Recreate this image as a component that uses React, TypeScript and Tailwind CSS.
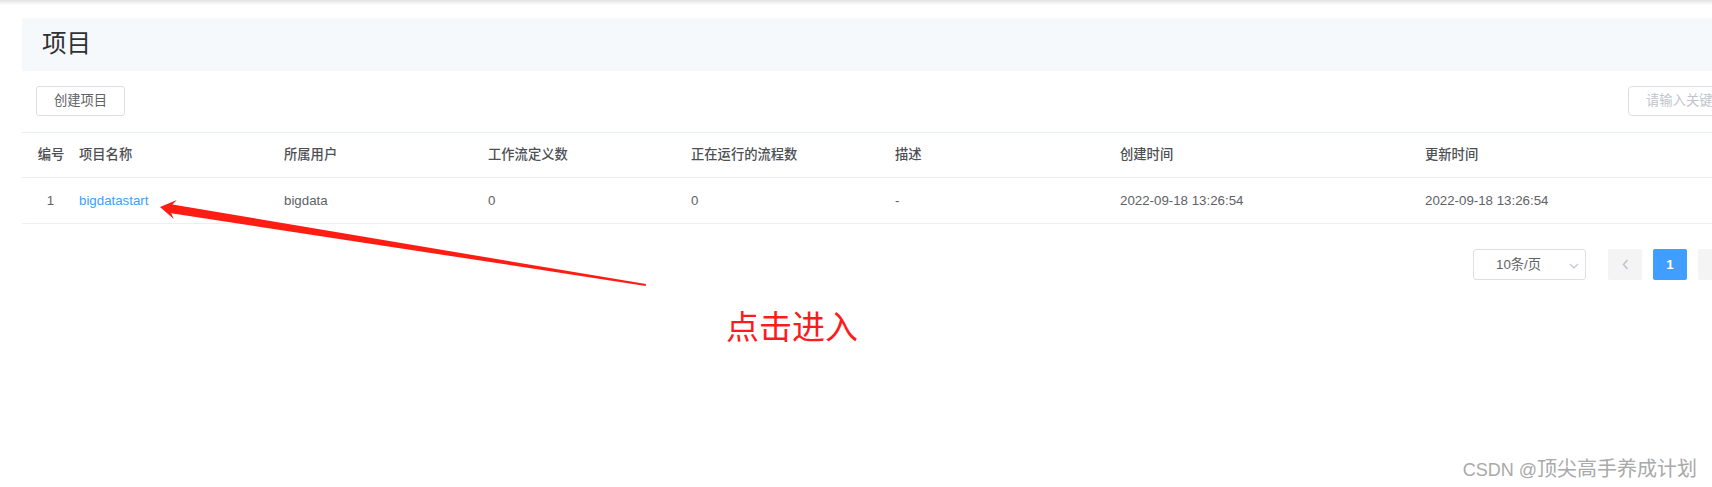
import React from "react";

const FONT = { fontFamily: '"Liberation Sans", "Noto Sans CJK SC", sans-serif' };

const headers = ["编号", "项目名称", "所属用户", "工作流定义数", "正在运行的流程数", "描述", "创建时间", "更新时间"];

export default function App() {
  const T = [160, 207];
  const ux = 0.9874, uy = 0.1585;
  const nx = -0.1585, ny = 0.9874;
  const pt = (along: number, perp: number) => [T[0] + along * ux + perp * nx, T[1] + along * uy + perp * ny];
  const L = 492;
  const pts = [
    pt(0, 0),
    pt(15.5, -9.7),
    pt(12, -4.4),
    pt(L, -0.9),
    pt(L, 0.9),
    pt(12, 4.4),
    pt(15.5, 9.7),
  ]
    .map((p) => `${p[0].toFixed(1)},${p[1].toFixed(1)}`)
    .join(" ");

  return (
    <div className="relative w-[1712px] h-[487px] overflow-hidden bg-white" style={FONT}>
      <div className="h-[5px] bg-linear-to-b from-[#e2e2e2] to-white" />
      <div className="w-[1842px] pl-[22px]">
        {/* title band */}
        <div className="mt-[13px] h-[53px] bg-[#f5f9fc] flex items-center pl-[20px]">
          <span className="text-[24.5px] text-[#303133] leading-none">项目</span>
        </div>
        {/* toolbar */}
        <div className="mt-[15px] h-[30px] flex items-center justify-between">
          <button className="ml-[14px] h-[30px] w-[89px] border border-[#dcdfe6] rounded-[3px] text-[13.3px] text-[#606266] bg-white flex items-center justify-center">
            创建项目
          </button>
          <div className="w-[200px] h-[30px] border border-[#dcdfe6] rounded-[4px] flex items-center pl-[17px] text-[13.3px] text-[#c0c4cc] mr-[14px]">
            请输入关键字
          </div>
        </div>
        {/* table */}
        <div className="mt-[16px] border-t border-[#e8edf5]">
          <div className="grid grid-cols-[57px_205px_204px_203px_204px_225px_305px_1fr] h-[45px] items-center border-b border-[#ebeef5] text-[13.3px] text-[#4d4f53] font-medium">
            {headers.map((h, i) => (
              <div key={h} className={i === 0 ? "text-center pl-[1px]" : ""}>
                {h}
              </div>
            ))}
          </div>
          <div className="grid grid-cols-[57px_205px_204px_203px_204px_225px_305px_1fr] h-[46px] items-center border-b border-[#ebeef5] text-[13.3px] text-[#606266]">
            <div className="text-center">1</div>
            <div className="text-[#409eff]">bigdatastart</div>
            <div>bigdata</div>
            <div>0</div>
            <div>0</div>
            <div>-</div>
            <div>2022-09-18 13:26:54</div>
            <div>2022-09-18 13:26:54</div>
          </div>
        </div>
        {/* pagination */}
        <div className="mt-[25px] flex justify-end pr-[110px] items-center">
          <div className="w-[113px] h-[31px] border border-[#dcdfe6] rounded-[3px] flex items-center text-[13.3px] text-[#606266]">
            <span className="pl-[22px] w-[86px]">10条/页</span>
            <svg width="10" height="6" viewBox="0 0 10 6" className="ml-[9px] mt-[2px]">
              <path d="M1 1 L5 5 L9 1" fill="none" stroke="#c0c4cc" strokeWidth="1.1" />
            </svg>
          </div>
          <div className="ml-[22px] w-[34px] h-[31px] bg-[#f4f4f5] rounded-[2px] flex items-center justify-center">
            <svg width="7" height="11" viewBox="0 0 7 11">
              <path d="M5.5 1 L1.5 5.5 L5.5 10" fill="none" stroke="#c0c4cc" strokeWidth="1.6" />
            </svg>
          </div>
          <div className="ml-[11px] w-[34px] h-[31px] bg-[#409eff] rounded-[2px] flex items-center justify-center text-white font-bold text-[13.3px]">
            1
          </div>
          <div className="ml-[11px] w-[34px] h-[31px] bg-[#f4f4f5] rounded-[2px]" />
        </div>
      </div>

      {/* annotation arrow */}
      <svg className="absolute left-0 top-0 pointer-events-none" width="1712" height="487">
        <polygon points={pts} fill="#fd1d12" />
      </svg>
      <div className="absolute left-[726px] top-[311px] text-[33px] leading-none text-[#fd1c1c]">点击进入</div>

      {/* watermark */}
      <div className="absolute right-[15px] top-[459px] text-[20px] leading-none text-[#a9a9a9] whitespace-nowrap">
        <span className="text-[18px]">CSDN @</span>顶尖高手养成计划
      </div>
    </div>
  );
}
